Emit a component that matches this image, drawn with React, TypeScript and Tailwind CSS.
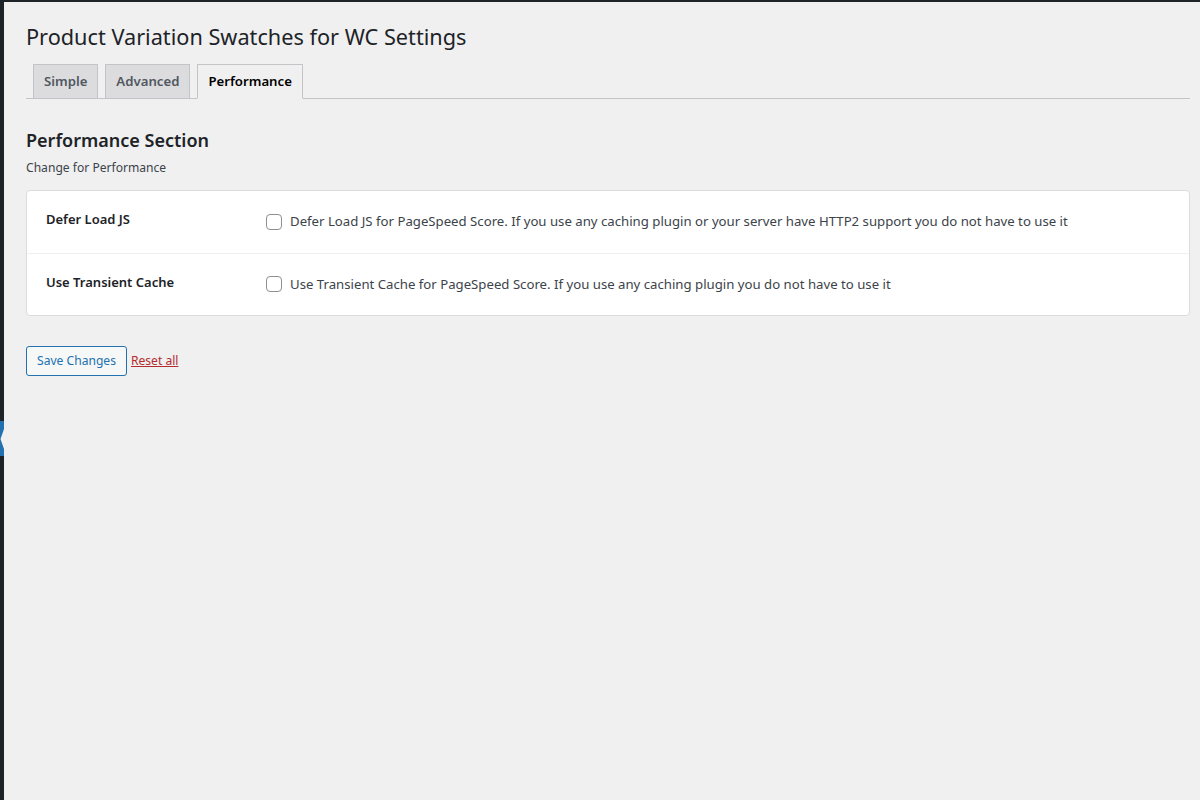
import React from 'react';

const font = { fontFamily: '"Noto Sans", "Open Sans", sans-serif' };

type Setting = {
  id: string;
  label: string;
  description: string;
};

const settings: Setting[] = [
  {
    id: 'defer_load_js',
    label: 'Defer Load JS',
    description:
      'Defer Load JS for PageSpeed Score. If you use any caching plugin or your server have HTTP2 support you do not have to use it',
  },
  {
    id: 'use_transient',
    label: 'Use Transient Cache',
    description: 'Use Transient Cache for PageSpeed Score. If you use any caching plugin you do not have to use it',
  },
];

const tabs = ['Simple', 'Advanced', 'Performance'];

const AdminMenuEdge: React.FC = () => (
  <div className="w-[4px] shrink-0 bg-[#1d2327] flex flex-col">
    <div className="h-[419px]" />
    <div className="h-[35px] bg-[#2271b1] flex items-center">
      <svg width="4" height="20" viewBox="0 0 4 20">
        <polygon points="4,0 0.5,10 4,20" fill="#f0f0f1" />
      </svg>
    </div>
  </div>
);

export default function App() {
  const active = 'Performance';

  return (
    <div className="w-[1200px] min-h-[800px] bg-[#f0f0f1] flex border-t-2 border-[#1d2327]" style={font}>
      <AdminMenuEdge />
      <div className="flex-1 pl-[22px] pr-[10px] text-[#3c434a]">
        <h1 className="text-[21.7px] leading-[29px] font-normal text-[#1d2327] pt-[20px] pb-[3px]">
          Product Variation Swatches for WC Settings
        </h1>

        <div className="flex items-end gap-[7px] pl-[7px] pt-[10px] border-b border-[#c3c4c7]">
          {tabs.map((tab) => (
            <div
              key={tab}
              className={`px-[10px] h-[35px] flex items-center text-[13.2px] font-semibold border border-[#c3c4c7] -mb-px ${
                tab === active
                  ? 'bg-[#f0f0f1] text-black border-b-[#f0f0f1]'
                  : 'bg-[#dcdcde] text-[#50575e]'
              }`}
            >
              {tab}
            </div>
          ))}
        </div>

        <h2 className="text-[18px] font-semibold text-[#1d2327] mt-[28px] leading-[26px]">Performance Section</h2>
        <p className="text-[12.1px] text-[#3c434a] mt-[6px] leading-[17px]">Change for Performance</p>

        <div className="mt-[14px] bg-white border border-[#dcdcde] rounded-[4px]">
          {settings.map((s, i) => (
            <div
              key={s.id}
              className={`flex items-center h-[62px] ${i > 0 ? 'border-t border-[#f0f0f1]' : ''}`}
            >
              <div className="w-[239px] pl-[19px] text-[13px] font-semibold text-[#1d2327] -mt-[4px]">
                {s.label}
              </div>
              <label className="flex items-center gap-[8px] text-[13.2px] text-[#3c434a]">
                <span className="w-[16px] h-[16px] rounded-[4px] border border-[#8c8f94] bg-white shrink-0" />
                {s.description}
              </label>
            </div>
          ))}
        </div>

        <div className="flex items-center gap-[4px] mt-[30px]">
          <button className="h-[30px] px-[10px] text-[12.1px] text-[#2271b1] bg-[#f6f7f7] border border-[#2271b1] rounded-[3px]">
            Save Changes
          </button>
          <a href="#" className="text-[12.1px] text-[#b32d2e] underline">
            Reset all
          </a>
        </div>
      </div>
    </div>
  );
}
